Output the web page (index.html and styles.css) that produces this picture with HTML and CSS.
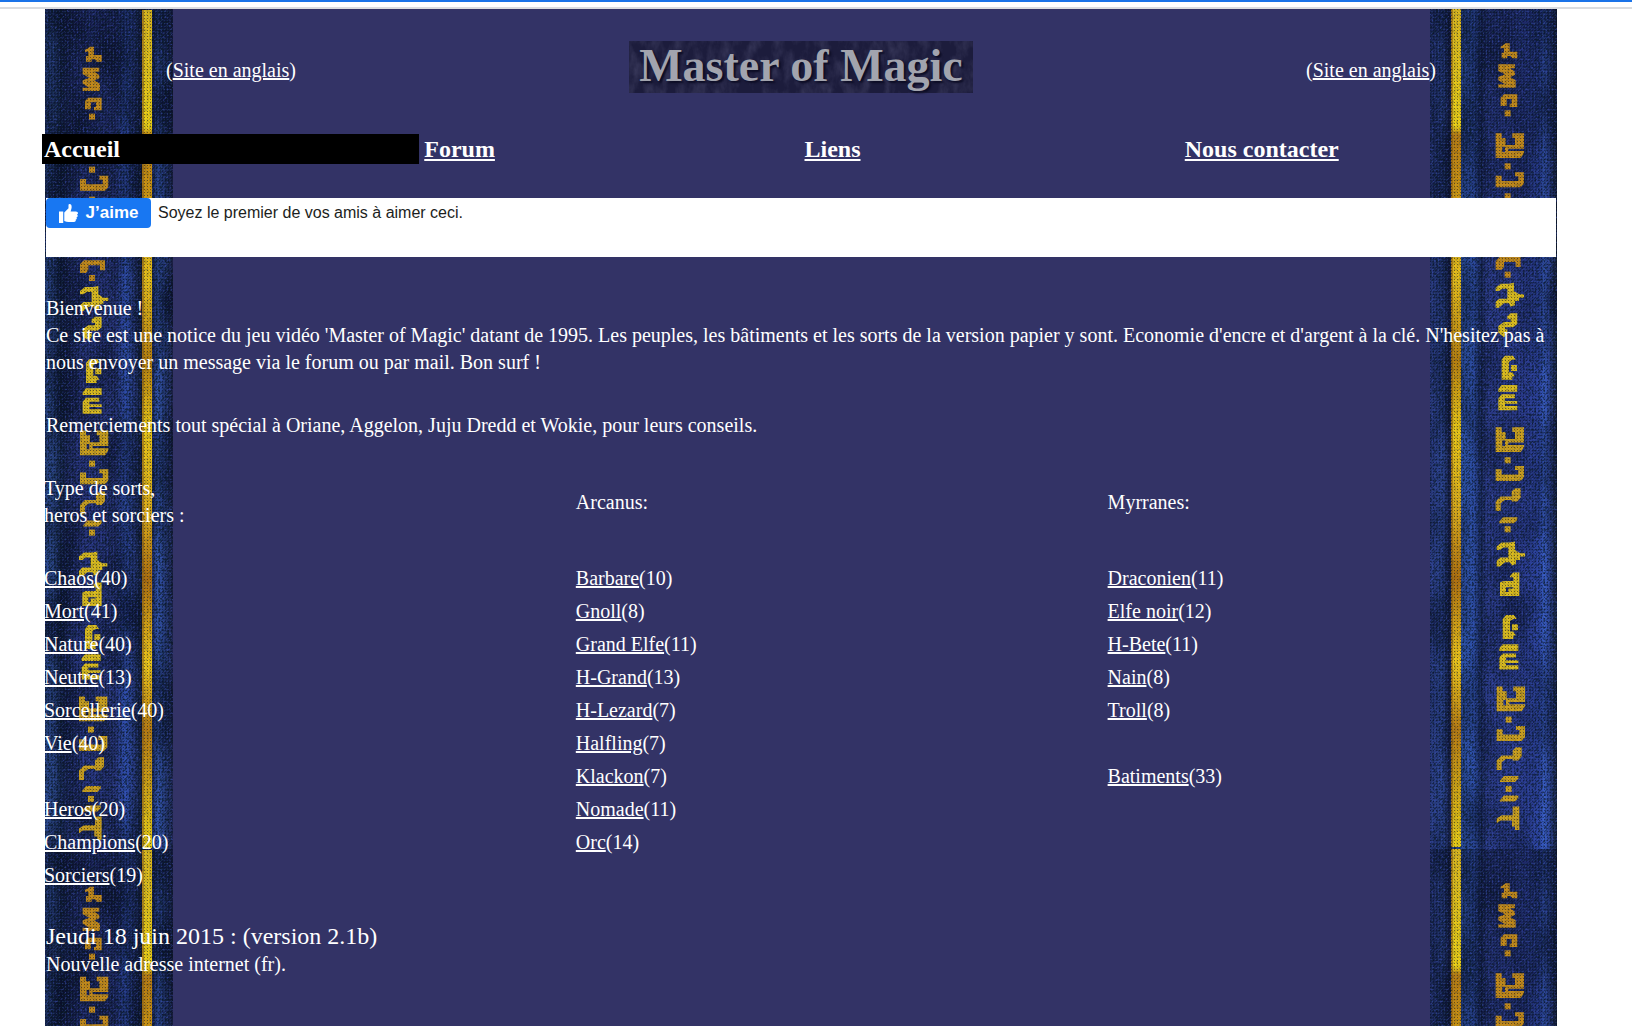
FILE: index.html
```
<!DOCTYPE html>
<html lang="fr">
<head>
  <meta charset="UTF-8">
  <title>Master of Magic</title>
  <meta name="viewport" content="width=device-width, initial-scale=1.0">
  <link rel="stylesheet" href="styles.css">
</head>

<body>

<div class="top-line"></div>

<div class="page">

  <!-- side borders -->
  <svg class="border border-left" aria-hidden="true">
    <defs>
      <filter id="weave" x="0" y="0" width="100%" height="100%" color-interpolation-filters="sRGB">
        <feTurbulence type="fractalNoise" baseFrequency="0.45 0.4" numOctaves="2" seed="4"/>
        <feColorMatrix values="0 0 0 0 0.03  0 0 0 0 0.09  0 0 0 0 0.12  3.5 0 0 0 -1.5"/>
      </filter>
      <filter id="sparkle" x="0" y="0" width="100%" height="100%" color-interpolation-filters="sRGB">
        <feTurbulence type="fractalNoise" baseFrequency="0.5" numOctaves="2" seed="11"/>
        <feColorMatrix values="0 0 0 0 0.22  0 0 0 0 0.3  0 0 0 0 0.68  0 3.5 0 0 -1.7"/>
      </filter>
      <filter id="clouds" x="0" y="0" width="100%" height="100%" color-interpolation-filters="sRGB">
        <feTurbulence type="fractalNoise" baseFrequency="0.03 0.012" numOctaves="2" seed="7"/>
        <feColorMatrix values="0 0 0 0 0.02  0 0 0 0 0.04  0 0 0 0 0.13  3 0 0 0 -1.2"/>
      </filter>
      <pattern id="dots" width="3" height="3" patternUnits="userSpaceOnUse">
        <rect width="1" height="1" fill="#050a28" opacity=".5"/>
        <rect x="2" y="2" width="1" height="1" fill="#3e6cc4" opacity=".2"/>
      </pattern>
      <linearGradient id="cloth-left">
        <stop offset="0" stop-color="#2c4c90"/>
        <stop offset=".07" stop-color="#28427c"/>
        <stop offset=".12" stop-color="#12203f"/>
        <stop offset=".17" stop-color="#18204c"/>
        <stop offset=".28" stop-color="#263078"/>
        <stop offset=".55" stop-color="#242e6e"/>
        <stop offset=".63" stop-color="#3050b4"/>
        <stop offset=".7" stop-color="#22306c"/>
        <stop offset=".75" stop-color="#101828"/>
        <stop offset=".84" stop-color="#1c2858"/>
        <stop offset=".88" stop-color="#3258b4"/>
        <stop offset=".94" stop-color="#243670"/>
        <stop offset="1" stop-color="#1c1f40"/>
      </linearGradient>
      <linearGradient id="cloth-right">
        <stop offset="0" stop-color="#2c3c84"/>
        <stop offset=".1" stop-color="#2a428c"/>
        <stop offset=".15" stop-color="#141838"/>
        <stop offset=".25" stop-color="#2c54a8"/>
        <stop offset=".34" stop-color="#2e50ac"/>
        <stop offset=".4" stop-color="#14204a"/>
        <stop offset=".45" stop-color="#2b3988"/>
        <stop offset=".75" stop-color="#2a3a90"/>
        <stop offset=".86" stop-color="#2c44a4"/>
        <stop offset=".89" stop-color="#3c64d0"/>
        <stop offset=".93" stop-color="#2e469c"/>
        <stop offset=".98" stop-color="#182038"/>
        <stop offset="1" stop-color="#081820"/>
      </linearGradient>
      <linearGradient id="shade" x2="0" y2="1">
        <stop offset="0" stop-color="#0a1030" stop-opacity=".45"/>
        <stop offset=".2" stop-color="#0a1030" stop-opacity=".35"/>
        <stop offset=".3" stop-color="#0a1030" stop-opacity=".1"/>
        <stop offset="1" stop-color="#2848a8" stop-opacity=".1"/>
      </linearGradient>
      <linearGradient id="gold" x2="0" y2="1">
        <stop offset="0" stop-color="#dcb81c"/>
        <stop offset=".14" stop-color="#ecd014"/>
        <stop offset=".15" stop-color="#b87c10"/>
        <stop offset=".22" stop-color="#d09810"/>
        <stop offset=".32" stop-color="#e8c018"/>
        <stop offset=".42" stop-color="#b8800c"/>
        <stop offset=".5" stop-color="#ecc814"/>
        <stop offset=".6" stop-color="#dcac18"/>
        <stop offset=".68" stop-color="#b0700c"/>
        <stop offset=".78" stop-color="#f0c818"/>
        <stop offset=".86" stop-color="#b87c10"/>
        <stop offset="1" stop-color="#ecd014"/>
      </linearGradient>

      <path id="r-hook" d="M15 10L30 0H42V25H65V45H50L45 38H35V45H18V28H25V15H15z"/>
      <path id="r-wave" d="M8 0H58V12H43L58 22V32L43 38 60 48V70H8V60H28L8 48V38L28 30 8 20z"/>
      <path id="r-cup" d="M15 10L25 0H65V38H42V28H48V14H33V35H15z"/>
      <path id="r-dot" d="M27 0H45V18H27z"/>
      <path id="r-twin" fill-rule="evenodd" d="M0 0H18V14H30V35H58V14H50V0H85V46H38V53H85V60L75 74H0zM20 40H28V56H20z"/>
      <path id="r-bowl" d="M0 10H18V26H68V12H58V0H85V34L75 45H0z"/>
      <path id="r-zed" d="M48 10L58 0H75V28L65 40H48V35H28L15 45V68H0V40L15 25H48z"/>
      <path id="r-bar" d="M10 14L22 0H65V8L55 18H10z"/>
      <path id="r-gate" d="M0 38V12L12 0H75V30H60V15H25V30L18 38z"/>
      <path id="r-man" d="M0 15L15 3H40L55 0V25L70 35H85V45H70V55H58V68L45 72 40 62H25L10 75H0V58L10 48H35V18H20L10 25H0z"/>
      <path id="r-two" d="M35 8L45 0H65V32L52 42H28V48H35V60L25 72 8 58V38L25 26H45V18H35z"/>
      <path id="r-arch" d="M40 10L50 0H68V70H10V30L20 25H50V14H40zM28 44V58H35V48H50V44z" fill-rule="evenodd"/>
      <path id="r-eye" d="M28 0H52L60 12H50L40 18V50H50L58 62H50V72H18V12zM46 28H64V46H46z"/>
      <path id="r-comb" d="M18 0H65V20H8V12zM18 28H58V40H28V48H65V56H28V63H65V76H8V40z"/>
      <path id="r-tee" d="M48 0H68V70H55V60H46V42H12L0 50V36L15 26H48z"/>

      <g id="runes-top">
        <g class="rune-dark">
          <use href="#r-hook" y="103"/>
          <use href="#r-wave" y="166"/>
          <use href="#r-cup" y="256"/>
          <use href="#r-dot" y="304"/>
          <use href="#r-twin" y="373"/>
          <use href="#r-dot" y="463"/>
          <use href="#r-bowl" y="490"/>
          <use href="#r-dot" y="553"/>
          <use href="#r-gate" y="744"/>
          <use href="#r-dot" y="788"/>
        </g>
        <g class="rune-light">
          <use href="#r-man" y="821"/>
          <use href="#r-two" y="913"/>
          <use href="#r-eye" y="1040"/>
          <use href="#r-comb" y="1128"/>
        </g>
        <g class="rune-mid">
          <use href="#r-twin" y="1255"/>
          <use href="#r-dot" y="1345"/>
          <use href="#r-bowl" y="1371"/>
          <use href="#r-zed" y="1438"/>
          <use href="#r-bar" y="1525"/>
          <use href="#r-dot" y="1552"/>
        </g>
      </g>
      <g id="runes-bottom">
        <g class="rune-light">
          <use href="#r-man" y="1598"/>
          <use href="#r-arch" y="1691"/>
          <use href="#r-eye" y="1818"/>
          <use href="#r-comb" y="1906"/>
        </g>
        <g class="rune-mid">
          <use href="#r-twin" y="2033"/>
          <use href="#r-dot" y="2123"/>
          <use href="#r-bowl" y="2151"/>
          <use href="#r-zed" y="2215"/>
          <use href="#r-bar" y="2301"/>
          <use href="#r-dot" y="2331"/>
          <use href="#r-bar" y="2360"/>
          <use href="#r-tee" y="2393"/>
        </g>
      </g>

      <pattern id="tile-left" width="128" height="840" patternUnits="userSpaceOnUse">
        <rect width="128" height="840" fill="url(#cloth-left)"/>
        <rect width="128" height="840" fill="url(#shade)"/>
        <rect width="128" height="840" filter="url(#clouds)" opacity=".7"/>
        <rect width="128" height="840" filter="url(#sparkle)" opacity=".6"/>
        <rect width="128" height="840" filter="url(#weave)" opacity=".6"/>
        <rect x="97" y="1" width="10" height="838" fill="url(#gold)"/>
        <rect x="97" y="1" width="2" height="838" fill="#8a5c10" opacity=".6"/>
        <g transform="scale(.3333)">
          <use href="#runes-top" x="105" y="10"/>
          <use href="#runes-bottom" x="102" y="30"/>
        </g>
        <rect width="128" height="840" filter="url(#weave)" opacity=".2"/>
        <rect width="128" height="840" fill="url(#dots)"/>
      </pattern>
      <pattern id="tile-right" width="128" height="840" patternUnits="userSpaceOnUse">
        <rect width="128" height="840" fill="url(#cloth-right)"/>
        <rect width="128" height="840" fill="url(#shade)"/>
        <rect width="128" height="840" filter="url(#clouds)" opacity=".5"/>
        <rect width="128" height="840" filter="url(#sparkle)" opacity=".6"/>
        <rect width="128" height="840" filter="url(#weave)" opacity=".5"/>
        <rect x="21" width="10" height="838" fill="url(#gold)"/>
        <rect x="21" width="2" height="838" fill="#8a5c10" opacity=".6"/>
        <g transform="scale(.3333)">
          <use href="#runes-top" x="197"/>
          <use href="#runes-bottom" x="200"/>
        </g>
        <rect width="128" height="840" filter="url(#weave)" opacity=".2"/>
        <rect width="128" height="840" fill="url(#dots)"/>
      </pattern>
    </defs>
    <rect width="128" height="100%" fill="url(#tile-left)"/>
  </svg>
  <svg class="border border-right" aria-hidden="true">
    <rect width="128" height="100%" fill="url(#tile-right)"/>
  </svg>

  <header>
    <span class="lang">(<a href="#en">Site en anglais</a>)</span>
    <h1 class="logo">
      <svg class="logo-stone" aria-hidden="true">
        <filter id="stone" x="0" y="0" width="100%" height="100%" color-interpolation-filters="sRGB">
          <feTurbulence type="fractalNoise" baseFrequency="0.09 0.05" numOctaves="4" seed="3"/>
          <feColorMatrix values="0 0 0 0 0.3  0 0 0 0 0.3  0 0 0 0 0.44  1.8 0 0 0 -0.7"/>
        </filter>
        <rect width="100%" height="100%" filter="url(#stone)"/>
      </svg>
      <span>Master of Magic</span>
    </h1>
    <span class="lang">(<a href="#en">Site en anglais</a>)</span>
  </header>

  <nav class="menu">
    <span class="current">Accueil</span>
    <span><a href="#forum">Forum</a></span>
    <span><a href="#liens">Liens</a></span>
    <span><a href="#contact">Nous contacter</a></span>
  </nav>

  <div class="like-box">
    <button class="like-button" type="button">
      <svg viewBox="0 0 18 18" width="19" height="19" aria-hidden="true">
        <path fill="#fff" d="M0 7h4v11H0zM5 8l4-4V1q0-1 1-1 2 0 2 3 0 1-1 4h5q2 0 2 1.500 0 1-1 1.500 1 .5.700 1.500-.3 1-1.200 1 .7.700.3 1.500-.4.800-1.100.9.500.6.100 1.300-.4.800-1.800.8H9q-2 0-4-1z"/>
      </svg>
      J’aime
    </button>
    <span>Soyez le premier de vos amis à aimer ceci.</span>
  </div>

  <main>
    <p>Bienvenue !<br>
    Ce site est une notice du jeu vidéo 'Master of Magic' datant de 1995. Les peuples, les bâtiments et les sorts de la version papier y sont. Economie d'encre et d'argent à la clé. N'hesitez pas à nous envoyer un message via le forum ou par mail. Bon surf !</p>

    <p>Remerciements tout spécial à Oriane, Aggelon, Juju Dredd et Wokie, pour leurs conseils.</p>

    <table class="index">
      <thead>
        <tr><th>Type de sorts,<br>heros et sorciers :</th><th>Arcanus:</th><th>Myrranes:</th></tr>
      </thead>
      <tbody>
        <tr><td><a href="#chaos">Chaos</a>(40)</td><td><a href="#barbare">Barbare</a>(10)</td><td><a href="#draconien">Draconien</a>(11)</td></tr>
        <tr><td><a href="#mort">Mort</a>(41)</td><td><a href="#gnoll">Gnoll</a>(8)</td><td><a href="#elfe-noir">Elfe noir</a>(12)</td></tr>
        <tr><td><a href="#nature">Nature</a>(40)</td><td><a href="#grand-elfe">Grand Elfe</a>(11)</td><td><a href="#h-bete">H-Bete</a>(11)</td></tr>
        <tr><td><a href="#neutre">Neutre</a>(13)</td><td><a href="#h-grand">H-Grand</a>(13)</td><td><a href="#nain">Nain</a>(8)</td></tr>
        <tr><td><a href="#sorcellerie">Sorcellerie</a>(40)</td><td><a href="#h-lezard">H-Lezard</a>(7)</td><td><a href="#troll">Troll</a>(8)</td></tr>
        <tr><td><a href="#vie">Vie</a>(40)</td><td><a href="#halfling">Halfling</a>(7)</td><td></td></tr>
        <tr><td></td><td><a href="#klackon">Klackon</a>(7)</td><td><a href="#batiments">Batiments</a>(33)</td></tr>
        <tr><td><a href="#heros">Heros</a>(20)</td><td><a href="#nomade">Nomade</a>(11)</td><td></td></tr>
        <tr><td><a href="#champions">Champions</a>(20)</td><td><a href="#orc">Orc</a>(14)</td><td></td></tr>
        <tr><td><a href="#sorciers">Sorciers</a>(19)</td><td></td><td></td></tr>
      </tbody>
    </table>

    <h2>Jeudi 18 juin 2015 : (version 2.1b)</h2>
    <p class="news">Nouvelle adresse internet (fr).</p>
  </main>

</div>

</body>
</html>
```
FILE: styles.css
```
body {
  margin: 0;
  background: #fff;
  color: #fff;
  font-family: 'Liberation Serif', 'Times New Roman', serif;
  font-size: 20px;
  line-height: 27px;
}
a {
  color: #fff;
}
.top-line {
  height: 5px;
  border-top: 2px solid #1a73e8;
  border-bottom: 2px solid #dadce0;
}
.page {
  position: relative;
  margin: 0 75px 0 45px;
  min-height: calc(100vh - 9px);
  background: #333366;
}
.border {
  position: absolute;
  top: 0;
  width: 128px;
  height: 100%;
}
.border-left {
  left: 0;
}
.border-right {
  right: 0;
  width: 127px;
}
.rune-dark {
  fill: #c48a18;
}
.rune-mid {
  fill: #cca01c;
}
.rune-light {
  fill: #dcbc1c;
}
header,
.menu,
.like-box,
main {
  position: relative;
}
header {
  display: flex;
  justify-content: space-between;
  align-items: center;
  padding: 32px 121px 41px;
}
.lang {
  padding-top: 7px;
}
.logo {
  position: relative;
  width: 344px;
  height: 52px;
  margin: 0;
  background: #1c1c3c;
  color: #a2a4ae;
  font-size: 46px;
  line-height: 50px;
  text-align: center;
  text-shadow: 2px 2px 2px #0c0c24;
}
.logo-stone {
  position: absolute;
  top: 0;
  left: 0;
  width: 100%;
  height: 100%;
  opacity: .6;
}
.logo span {
  position: relative;
}
.menu {
  display: grid;
  grid-template-columns: repeat(4, 1fr);
  gap: 3px;
  margin: 0 -3px 34px;
  font-size: 24px;
  font-weight: bold;
  line-height: 30px;
}
.menu span {
  padding: 0 2px;
}
.menu .current {
  background: #000;
}
.like-box {
  display: flex;
  align-items: flex-start;
  gap: 7px;
  height: 59px;
  margin: 0 1px 38px;
  background: #fff;
  color: #1c1e21;
  font-family: 'Liberation Sans', Arial, sans-serif;
  font-size: 16px;
  line-height: 29px;
}
.like-button {
  display: flex;
  align-items: center;
  justify-content: center;
  gap: 8px;
  width: 105px;
  height: 30px;
  padding: 0;
  border: none;
  border-radius: 4px;
  background: #1877f2;
  color: #fff;
  font-family: inherit;
  font-size: 17px;
  font-weight: bold;
  cursor: pointer;
}
main p {
  margin: 0 1px 36px;
}
.index {
  width: calc(100% + 8px);
  margin: 0 -3px 30px;
  border-collapse: collapse;
  table-layout: fixed;
}
.index th,
.index td {
  width: 35%;
  height: 33px;
  padding: 0 2px;
  text-align: left;
  font-weight: normal;
}
.index th {
  padding-bottom: 33px;
}
.index th:last-child {
  width: 30%;
}
h2 {
  margin: 0 1px;
  font-size: 24px;
  font-weight: normal;
  line-height: 29px;
}
main .news {
  margin-bottom: 0;
}
```
